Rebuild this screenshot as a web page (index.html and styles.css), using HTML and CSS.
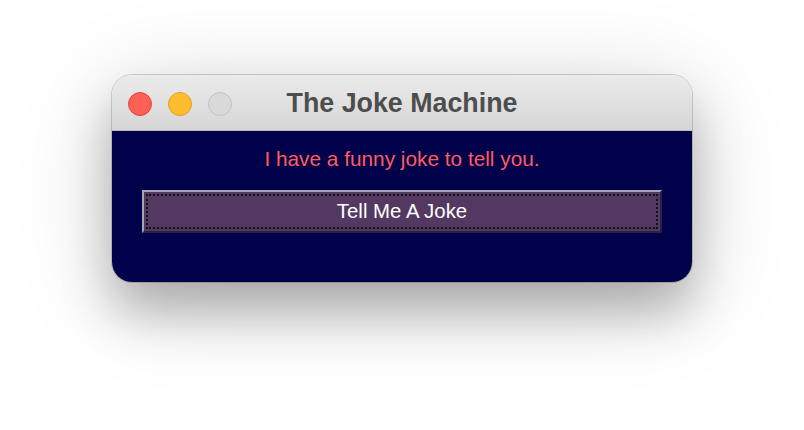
FILE: index.html
```html
<!DOCTYPE html>
<html>
<head>
<meta charset="utf-8">
<title>The Joke Machine</title>
<link rel="stylesheet" href="styles.css">
</head>
<body>
<div class="window">
  <div class="titlebar">
    <div class="lights">
      <span class="light red"></span>
      <span class="light yellow"></span>
      <span class="light gray"></span>
    </div>
    <div class="title">The Joke Machine</div>
    <div></div>
  </div>
  <div class="content">
    <div class="label">I have a funny joke to tell you.</div>
    <button class="btn"><span class="btn-text">Tell Me A Joke</span></button>
  </div>
</div>
</body>
</html>
```
FILE: styles.css
```css
html, body {
  margin: 0;
  padding: 0;
  background: #ffffff;
}
body {
  width: 804px;
  height: 430px;
  overflow: hidden;
  font-family: "Liberation Sans", Arial, sans-serif;
}
.window {
  width: 580px;
  margin: 75px auto 0;
  border-radius: 20px;
  overflow: hidden;
  box-shadow:
    0 0 0 1px rgba(0, 0, 0, 0.16),
    0 30px 50px rgba(0, 0, 0, 0.26),
    0 16px 100px rgba(0, 0, 0, 0.16);
}
.titlebar {
  height: 55px;
  border-bottom: 1px solid #bdbdbd;
  background: linear-gradient(#ebebeb, #d6d6d6);
  display: grid;
  grid-template-columns: 1fr auto 1fr;
  align-items: center;
}
.lights {
  display: flex;
  gap: 16px;
  padding-left: 16px;
  padding-top: 2px;
}
.light {
  width: 22px;
  height: 22px;
  border-radius: 50%;
  border: 1px solid;
  display: block;
}
.red { background: #fe5f57; border-color: #e0443e; }
.yellow { background: #febc2e; border-color: #dea123; }
.gray { background: #d9d9d9; border-color: #c3c3c3; }
.title {
  font-weight: bold;
  font-size: 26.8px;
  color: #4d4d4d;
  line-height: 30px;
}
.content {
  height: 151px;
  background: #00004b;
  padding: 16px 30px 0;
  box-sizing: border-box;
  display: flex;
  flex-direction: column;
}
.label {
  text-align: center;
  color: #ff5c5c;
  font-size: 20.8px;
  line-height: 24px;
  margin-bottom: 19px;
}
.btn {
  height: 43px;
  margin: 0;
  padding: 2px;
  box-sizing: border-box;
  background: #533962;
  border-style: solid;
  border-width: 2px;
  border-color: #a8a2b6 #2a2040 #2a2040 #a8a2b6;
  display: flex;
  font-family: "Liberation Sans", Arial, sans-serif;
}
.btn-text {
  flex: 1;
  display: flex;
  align-items: center;
  justify-content: center;
  border: 2px dotted #111111;
  color: #ffffff;
  font-size: 20.4px;
}
```
